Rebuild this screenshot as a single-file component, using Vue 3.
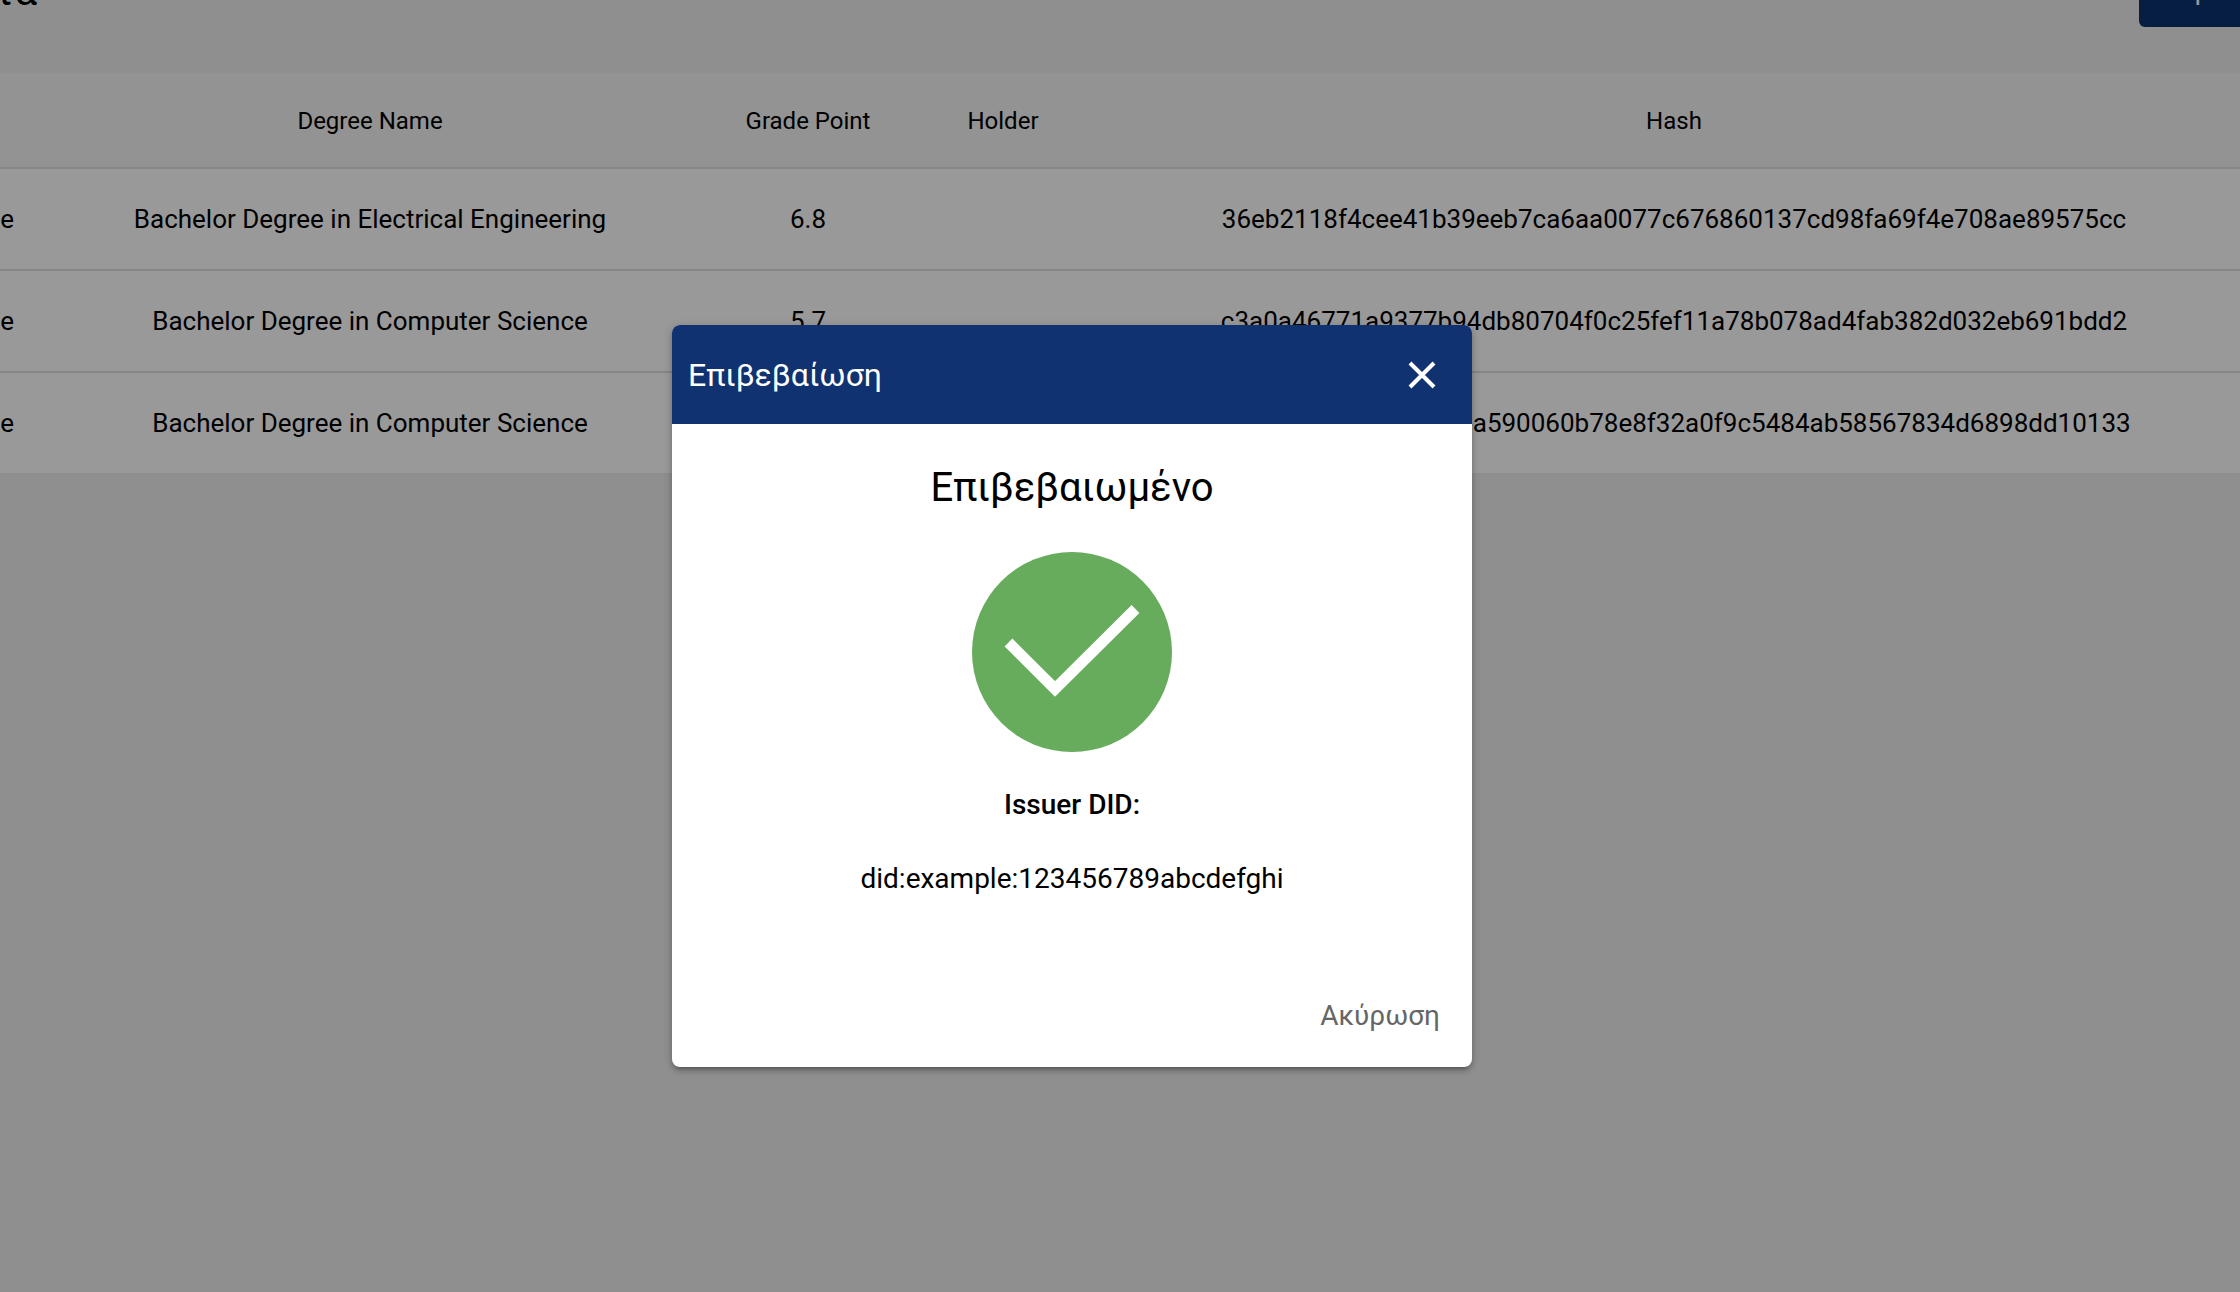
<script setup>
import { ref } from 'vue'

const open = ref(true)

const rows = [
  { level: 'e', degree: 'Bachelor Degree in Electrical Engineering', grade: '6.8', holder: '', hash: '36eb2118f4cee41b39eeb7ca6aa0077c676860137cd98fa69f4e708ae89575cc' },
  { level: 'e', degree: 'Bachelor Degree in Computer Science', grade: '5.7', holder: '', hash: 'c3a0a46771a9377b94db80704f0c25fef11a78b078ad4fab382d032eb691bdd2' },
  { level: 'e', degree: 'Bachelor Degree in Computer Science', grade: '7.2', holder: '', hash: '4b81df7e2a96d3580ea590060b78e8f32a0f9c5484ab58567834d6898dd10133' }
]
</script>

<template>
  <div class="page">
    <header class="toolbar">
      <h1 class="page-title">τα</h1>
      <button type="button" class="add">Προσθήκη</button>
    </header>

    <table class="grid">
      <colgroup>
        <col class="c-level" />
        <col class="c-degree" />
        <col class="c-grade" />
        <col class="c-holder" />
        <col />
      </colgroup>
      <thead>
        <tr>
          <th></th>
          <th>Degree Name</th>
          <th>Grade Point</th>
          <th>Holder</th>
          <th>Hash</th>
        </tr>
      </thead>
      <tbody>
        <tr v-for="(row, i) in rows" :key="i">
          <td class="level">{{ row.level }}</td>
          <td>{{ row.degree }}</td>
          <td>{{ row.grade }}</td>
          <td>{{ row.holder }}</td>
          <td>{{ row.hash }}</td>
        </tr>
      </tbody>
    </table>

    <div v-if="open" class="backdrop">
      <section class="dialog" role="dialog" aria-modal="true" aria-labelledby="dialog-title">
        <header class="dialog-bar">
          <h2 id="dialog-title">Επιβεβαίωση</h2>
          <button type="button" class="close" aria-label="Κλείσιμο" @click="open = false">
            <svg viewBox="0 0 48 48" width="48" height="48">
              <path d="M12 12 36 36M36 12 12 36" fill="none" stroke="#fff" stroke-width="4" />
            </svg>
          </button>
        </header>
        <div class="dialog-body">
          <h3>Επιβεβαιωμένο</h3>
          <svg class="status" viewBox="0 0 200 200" width="200" height="200" aria-hidden="true">
            <circle cx="100" cy="100" r="100" fill="#67ac5c" />
            <path d="M36.500 90.500 83 137 163.500 57" fill="none" stroke="#fff" stroke-width="11" />
          </svg>
          <p class="label">Issuer DID:</p>
          <p class="did">did:example:123456789abcdefghi</p>
        </div>
        <footer class="dialog-actions">
          <button type="button" class="cancel" @click="open = false">Ακύρωση</button>
        </footer>
      </section>
    </div>
  </div>
</template>

<style>
body {
  background: #eee;
}
</style>

<style scoped>
.page {
  position: relative;
  min-height: 100vh;
  overflow: hidden;
  background: #eee;
  color: #000;
  font-family: Roboto, "Noto Sans", sans-serif;
}

.page * {
  box-sizing: border-box;
}

h1,
h2,
h3,
p {
  margin: 0;
  font-weight: 400;
}

button {
  border: 0;
  padding: 0;
  background: none;
  font-family: inherit;
  cursor: pointer;
}

.toolbar {
  display: flex;
  align-items: flex-end;
  justify-content: space-between;
  height: 122px;
  margin-top: -49px;
  padding-bottom: 46px;
}

.page-title {
  margin-left: -6px;
  font-size: 40px;
  line-height: 70px;
}

.add {
  flex: none;
  width: 202px;
  height: 76px;
  margin-right: -101px;
  border-radius: 6px;
  background: #0c3270;
  color: #fff;
  font-size: 28px;
}

.grid {
  width: 100%;
  table-layout: fixed;
  border-collapse: separate;
  border-spacing: 0;
  background: #fff;
}

.c-level {
  width: 22px;
}

.c-degree {
  width: 696px;
}

.c-grade {
  width: 180px;
}

.c-holder {
  width: 210px;
}

.grid th,
.grid td {
  padding: 0;
  text-align: center;
  white-space: nowrap;
  border-bottom: 2px solid #e0e0e0;
}

.grid th {
  height: 96px;
  padding-top: 2px;
  background: #f5f5f5;
  font-size: 24px;
  font-weight: 400;
}

.grid td {
  height: 102px;
  font-size: 26px;
}

.grid td.level {
  padding-right: 8px;
  text-align: right;
}

.grid tbody tr:last-child td {
  height: 100px;
  border-bottom: 0;
}

.backdrop {
  position: absolute;
  inset: 0;
  display: flex;
  align-items: center;
  justify-content: center;
  padding: 100px 96px 0 0;
  background: rgba(0, 0, 0, 0.4);
}

.dialog {
  width: 800px;
  overflow: hidden;
  border-radius: 8px;
  background: #fff;
  box-shadow: 0 2px 10px rgba(0, 0, 0, 0.2), 0 4px 4px rgba(0, 0, 0, 0.14), 0 6px 2px -4px rgba(0, 0, 0, 0.12);
}

.dialog-bar {
  display: flex;
  align-items: center;
  justify-content: space-between;
  height: 99px;
  padding: 0 26px 0 16px;
  background: #113270;
  color: #fff;
}

.dialog-bar h2 {
  font-size: 32px;
}

.close {
  display: flex;
}

.dialog-body {
  display: flex;
  flex-direction: column;
  align-items: center;
  padding-top: 32px;
  text-align: center;
}

h3 {
  margin-bottom: 32px;
  font-size: 40px;
  line-height: 64px;
}

.status {
  display: block;
}

.label {
  margin-top: 32px;
  font-size: 28px;
  font-weight: 500;
  line-height: 42px;
}

.did {
  margin-top: 32px;
  font-size: 28px;
  line-height: 42px;
}

.dialog-actions {
  display: flex;
  justify-content: flex-end;
  padding: 95px 32px 30px;
}

.cancel {
  color: #666;
  font-size: 28px;
  line-height: 42px;
}
</style>
